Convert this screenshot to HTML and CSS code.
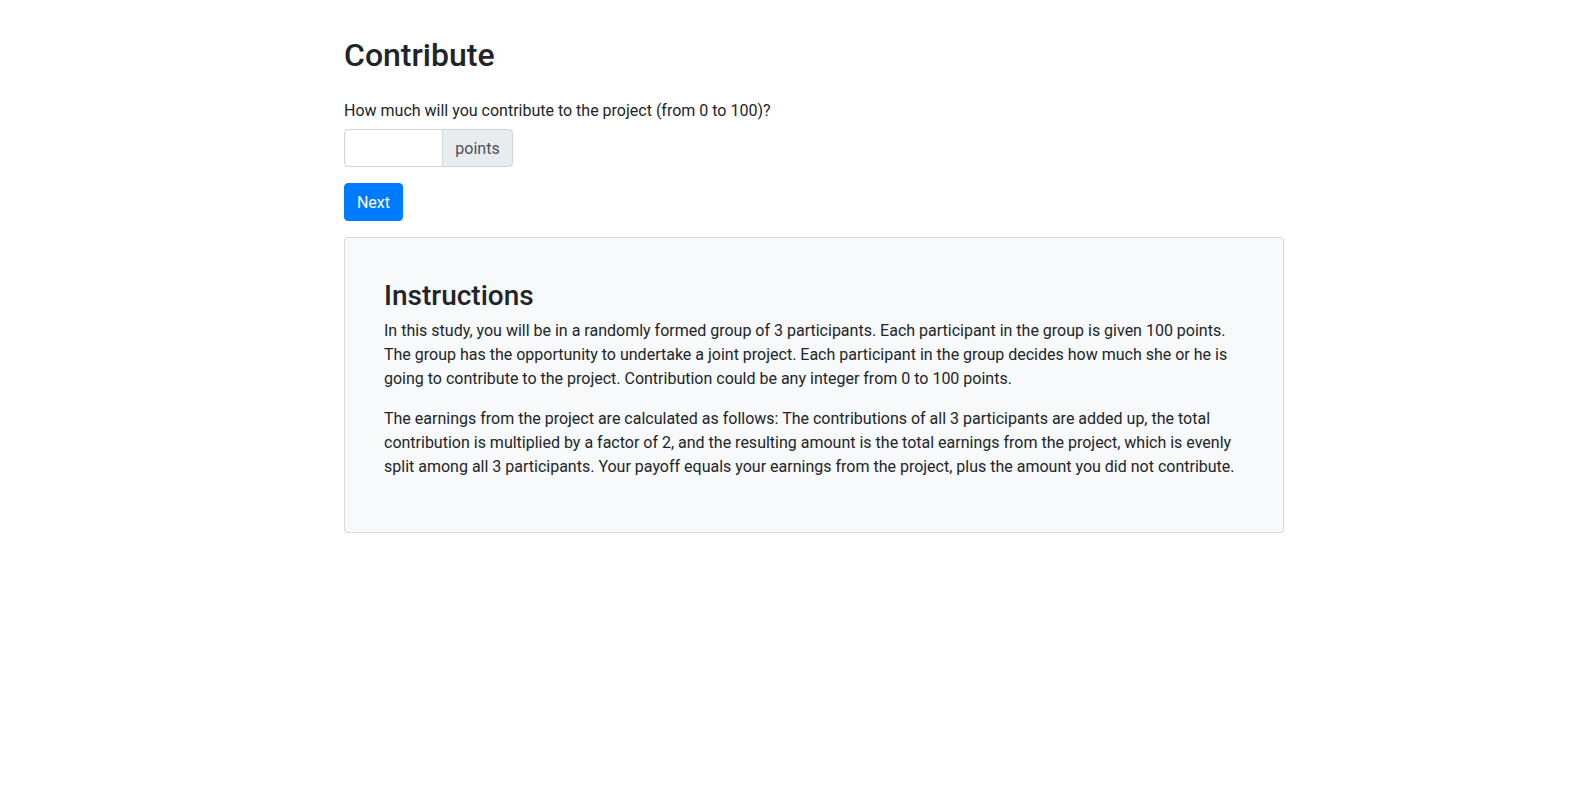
FILE: index.html
```html
<!DOCTYPE html>
<html lang="en">
<head>
<meta charset="utf-8">
<title>Contribute</title>
<link rel="stylesheet" href="styles.css">
</head>
<body>
<div class="page">
  <h2 class="title">Contribute</h2>
  <form class="form">
    <label class="label" for="contribution">How much will you contribute to the project (from 0 to 100)?</label>
    <div class="input-group">
      <input class="input" id="contribution" type="number">
      <span class="addon">points</span>
    </div>
    <button class="btn" type="button">Next</button>
  </form>
  <div class="card">
    <h3 class="card-title">Instructions</h3>
    <p class="text">In this study, you will be in a randomly formed group of 3 participants. Each participant in the group is given 100 points. The group has the opportunity to undertake a joint project. Each participant in the group decides how much she or he is going to contribute to the project. Contribution could be any integer from 0 to 100 points.</p>
    <p class="text">The earnings from the project are calculated as follows: The contributions of all 3 participants are added up, the total contribution is multiplied by a factor of 2, and the resulting amount is the total earnings from the project, which is evenly split among all 3 participants. Your payoff equals your earnings from the project, plus the amount you did not contribute.</p>
  </div>
</div>
</body>
</html>
```

FILE: styles.css
```css
html, body {
  margin: 0;
  padding: 0;
  background: #fff;
}
body {
  font-family: Roboto, "Liberation Sans", sans-serif;
  font-size: 16px;
  line-height: 1.5;
  color: #212529;
}
.page {
  width: 940px;
  margin-left: 344px;
}
.title {
  font-size: 32px;
  font-weight: 500;
  line-height: 1.2;
  margin: 36px 0 25px;
}
.form {
  margin: 0;
}
.label {
  display: block;
  margin-bottom: 6px;
}
.input-group {
  display: flex;
  width: 169px;
  height: 38px;
  margin-bottom: 16px;
}
.input {
  box-sizing: border-box;
  width: 99px;
  height: 38px;
  margin: 0;
  padding: 6px 12px;
  border: 1px solid #ced4da;
  border-radius: 4px 0 0 4px;
  font: inherit;
  color: #495057;
  background: #fff;
  -moz-appearance: textfield;
}
.input::-webkit-outer-spin-button,
.input::-webkit-inner-spin-button {
  -webkit-appearance: none;
  margin: 0;
}
.addon {
  box-sizing: border-box;
  display: flex;
  align-items: center;
  justify-content: center;
  padding-top: 1px;
  width: 71px;
  height: 38px;
  margin-left: -1px;
  border: 1px solid #ced4da;
  border-radius: 0 4px 4px 0;
  background: #e9ecef;
  color: #495057;
}
.btn {
  display: block;
  box-sizing: border-box;
  height: 38px;
  width: 59px;
  padding: 1px 0 0;
  border: 1px solid #007bff;
  border-radius: 4px;
  background: #007bff;
  color: #fff;
  font: inherit;
  margin-bottom: 16px;
}
.card {
  box-sizing: border-box;
  width: 940px;
  padding: 41px 38px 37px 39px;
  border: 1px solid rgba(0, 0, 0, 0.125);
  border-radius: 4px;
  background: #f8f9fa;
}
.card-title {
  font-size: 28px;
  font-weight: 500;
  line-height: 1.2;
  margin: 0 0 6px;
}
.text {
  margin: 0 0 16px;
}
```
